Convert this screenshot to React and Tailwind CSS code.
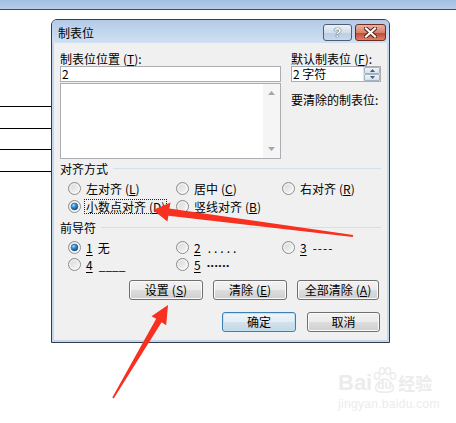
import React from 'react'

const Radio = ({ on }) => (
    <svg width="13" height="13" viewBox="0 0 13 13" className="shrink-0">
        <defs>
            <linearGradient id="rbg" x1="0" y1="0" x2="1" y2="1">
                <stop offset="0" stopColor="#d4d4d4" />
                <stop offset="1" stopColor="#fbfbfb" />
            </linearGradient>
            <radialGradient id="rdot" cx="0.35" cy="0.3" r="0.8">
                <stop offset="0" stopColor="#9fdcff" />
                <stop offset="0.45" stopColor="#2a8ad4" />
                <stop offset="1" stopColor="#0b3f72" />
            </radialGradient>
        </defs>
        <circle cx="6.5" cy="6.5" r="6" fill="url(#rbg)" stroke="#8c8c8c" />
        <circle cx="6.5" cy="6.5" r="4.6" fill="none" stroke="#ffffff" strokeOpacity="0.7" />
        {on && <circle cx="6.5" cy="6.5" r="3.4" fill="url(#rdot)" stroke="#1a4f80" strokeWidth="0.5" />}
    </svg>
)

const Key = ({ k }) => (
    <span className="ml-[3px]">(<span className="underline underline-offset-1">{k}</span>)</span>
)

const Option = ({ on, focus, children }) => (
    <div className="flex items-center h-[16px]">
        <Radio on={on} />
        <span className={focus
            ? 'ml-[3px] px-[1px] h-[15px] leading-[13px] border border-dotted border-[#222]'
            : 'ml-[3px] px-[1px] h-[15px] leading-[13px] border border-transparent'}>
            {children}
        </span>
    </div>
)

const Btn = ({ w, def, children }) => (
    <div className={def
        ? `${w} h-[20px] rounded-[3px] border border-[#3c7fb1] shadow-[inset_0_0_0_1px_#bfe3f8] bg-[linear-gradient(#eef5fa_0%,#e3edf4_50%,#d3e2ec_51%,#c5d7e4_100%)] flex items-center justify-center leading-[14px]`
        : `${w} h-[20px] rounded-[3px] border border-[#707070] shadow-[inset_0_0_0_1px_#fbfbfb] bg-[linear-gradient(#f2f2f2_0%,#ebebeb_50%,#dddddd_51%,#cfcfcf_100%)] flex items-center justify-center leading-[14px]`}>
        {children}
    </div>
)

const Tri = ({ up }) => (
    <svg width="7" height="4" viewBox="0 0 7 4">
        <path d={up ? 'M0 4L3.5 0L7 4Z' : 'M0 0L7 0L3.5 4Z'} fill="#a7a7a7" />
    </svg>
)

const GroupHead = ({ label }) => (
    <div className="h-[13px] flex items-center">
        <span className="leading-[13px]">{label}</span>
        <div className="ml-[5px] flex-1 h-px bg-[#d5dfe5]" />
    </div>
)

const Dialog = () => (
    <div className="w-[339px] rounded-t-[6px] border border-[#343d4a] bg-[#c4d7ee] flex flex-col">
        {/* title bar */}
        <div className="h-[23px] flex items-start rounded-t-[5px] bg-[linear-gradient(#b3cae7,#d1e0f2)]">
            <span className="pl-[6px] mt-[6px] leading-[13px]">制表位</span>
            <div className="ml-auto mt-[4px] mr-[3px] flex gap-[3px]">
                <div className="w-[29px] h-[17px] rounded-[3px] border border-[#4f5f73] bg-[linear-gradient(#eaf0f8_0%,#d2deec_50%,#bccde2_51%,#c9d8ea_100%)] flex items-center justify-center">
                    <span className="font-['Liberation_Sans',sans-serif] font-bold text-[13px] leading-[13px] text-white [text-shadow:0_0_1px_#2c3a4a,0_0_1px_#2c3a4a]">?</span>
                </div>
                <div className="w-[31px] h-[17px] rounded-[3px] border border-[#6e2b20] bg-[linear-gradient(#eab1a3_0%,#d8806b_50%,#c2462d_51%,#d9826b_100%)] flex items-center justify-center">
                    <svg width="13" height="11" viewBox="0 0 13 11">
                        <path d="M2 1.5L11 9.5M11 1.5L2 9.5" stroke="#4a1f18" strokeWidth="4" strokeLinecap="square" />
                        <path d="M2 1.5L11 9.5M11 1.5L2 9.5" stroke="#ffffff" strokeWidth="2.2" strokeLinecap="square" />
                    </svg>
                </div>
            </div>
        </div>

        {/* body */}
        <div className="mx-[2px] mb-[2px] bg-[#f0f0f0] px-[6px] pt-[9px] pb-[8px] flex flex-col">
            <div className="flex gap-[10px]">
                <div className="w-[221px] flex flex-col">
                    <div className="h-[14px] leading-[13px]">制表位位置<Key k="T" />:</div>
                    <div className="h-[16px] border border-[#abadb3] bg-white pl-[1px] text-[12px] leading-[13px]">2</div>
                    <div className="mt-[1px] h-[76px] border border-[#abadb3] bg-white flex justify-end">
                        <div className="w-[17px] bg-[#f5f5f5] flex flex-col justify-between items-center py-[7px]">
                            <Tri up />
                            <Tri />
                        </div>
                    </div>
                </div>
                <div className="w-[90px] flex flex-col">
                    <div className="h-[14px] leading-[13px] whitespace-nowrap">默认制表位<Key k="F" />:</div>
                    <div className="h-[16px] border border-[#abadb3] bg-white flex">
                        <span className="pl-[1px] leading-[13px] flex-1">2 字符</span>
                        <div className="w-[17px] flex flex-col border-l border-[#e3e3e3]">
                            <div className="h-[7px] border border-[#a3b3c6] rounded-[1px] bg-[linear-gradient(#f0f4f8,#d6e0ea)] flex items-center justify-center">
                                <svg width="5" height="3" viewBox="0 0 5 3"><path d="M0 3L2.5 0L5 3Z" fill="#4a5c72" /></svg>
                            </div>
                            <div className="h-[7px] border border-[#a3b3c6] rounded-[1px] bg-[linear-gradient(#f0f4f8,#d6e0ea)] flex items-center justify-center">
                                <svg width="5" height="3" viewBox="0 0 5 3"><path d="M0 0L5 0L2.5 3Z" fill="#4a5c72" /></svg>
                            </div>
                        </div>
                    </div>
                    <div className="mt-[11px] h-[13px] leading-[13px] whitespace-nowrap">要清除的制表位:</div>
                </div>
            </div>

            <div className="mt-[3px]">
                <GroupHead label="对齐方式" />
            </div>
            <div className="mt-[5px] pl-[8px] grid grid-cols-[108px_106px_1fr] gap-y-[2px]">
                <Option>左对齐<Key k="L" /></Option>
                <Option>居中<Key k="C" /></Option>
                <Option>右对齐<Key k="R" /></Option>
                <Option on focus>小数点对齐<Key k="D" /></Option>
                <Option>竖线对齐<Key k="B" /></Option>
            </div>

            <div className="mt-[7px]">
                <GroupHead label="前导符" />
            </div>
            <div className="mt-[5px] pl-[8px] grid grid-cols-[108px_106px_1fr] gap-y-[1px]">
                <Option on><span className="underline underline-offset-2">1</span><span className="ml-[5px]">无</span></Option>
                <Option><span className="underline underline-offset-2">2</span><span className="ml-[7px] tracking-[3px]">.....</span></Option>
                <Option><span className="underline underline-offset-2">3</span><span className="ml-[6px] tracking-[1px]">----</span></Option>
                <Option><span className="underline underline-offset-2">4</span><span className="ml-[6px]">____</span></Option>
                <Option><span className="underline underline-offset-2">5</span><span className="ml-[6px] font-['Noto_Sans',sans-serif] font-bold tracking-[0.5px]">······</span></Option>
            </div>

            <div className="mt-[8px] pr-[2px] flex justify-end gap-[10px]">
                <Btn w="w-[74px]">设置<Key k="S" /></Btn>
                <Btn w="w-[74px]">清除<Key k="E" /></Btn>
                <Btn w="w-[82px]">全部清除<Key k="A" /></Btn>
            </div>
            <div className="mt-[12px] pr-[1px] flex justify-end gap-[11px]">
                <Btn w="w-[74px]" def>确定</Btn>
                <Btn w="w-[73px]">取消</Btn>
            </div>
        </div>
    </div>
)

const Arrows = () => (
    <svg className="absolute inset-0 pointer-events-none" width="456" height="423" viewBox="0 0 456 423">
        <polygon fill="#f7301f" points="153,210 170.5,202.5 169.4,208.4 353.2,235.1 352.8,236.9 168.4,215.8 167.4,221.5" />
        <polygon fill="#f7301f" points="168,305 166.2,325.2 161.6,322.3 113.7,398.4 112.3,397.6 156.2,318.8 151.5,316.2" />
    </svg>
)

const Watermark = () => (
    <div className="absolute left-[338px] top-[367px] flex flex-col text-[#ececec] select-none">
        <div className="flex items-end h-[26px]">
            <span className="font-['Liberation_Sans',sans-serif] font-bold text-[22px] leading-[20px]">Bai</span>
            <div className="relative w-[25px] h-[26px]">
                <svg className="absolute inset-0" width="25" height="26" viewBox="0 0 25 26">
                    <ellipse cx="5" cy="9" rx="2.6" ry="3.2" fill="none" stroke="#ececec" strokeWidth="1.5" />
                    <ellipse cx="10" cy="4" rx="2.6" ry="3.2" fill="none" stroke="#ececec" strokeWidth="1.5" />
                    <ellipse cx="16" cy="4" rx="2.6" ry="3.2" fill="none" stroke="#ececec" strokeWidth="1.5" />
                    <ellipse cx="21" cy="9" rx="2.6" ry="3.2" fill="none" stroke="#ececec" strokeWidth="1.5" />
                    <path d="M4 23C2 19 8 12 12.5 12C17 12 23 19 21 23C19 26 6 26 4 23Z" fill="none" stroke="#ececec" strokeWidth="1.5" />
                </svg>
                <span className="absolute left-[5px] bottom-[2px] font-['Liberation_Sans',sans-serif] font-bold text-[12px] leading-[12px]">du</span>
            </div>
            <span className="ml-[1px] font-bold text-[17px] leading-[20px]">经验</span>
        </div>
        <span className="mt-[5px] font-['Liberation_Sans',sans-serif] text-[12px] leading-[12px] tracking-[0.3px]">jingyan.baidu.com</span>
    </div>
)

export default function App() {
    return (
        <div className="relative w-[456px] h-[423px] overflow-hidden bg-white font-['Noto_Sans_CJK_SC','Noto_Sans',sans-serif] text-[12px] text-black">
            <div className="h-[10px] border-b border-[#4a4a4a] bg-[linear-gradient(#a2bee2,#b6cdeb)]" />
            <div className="flex">
                <div className="w-[51px] flex flex-col">
                    <div className="mt-[96px] h-px bg-black" />
                    <div className="mt-[21px] h-px bg-black" />
                    <div className="mt-[20px] h-px bg-black" />
                    <div className="mt-[21px] h-px bg-black" />
                </div>
                <div className="pt-[9px]">
                    <Dialog />
                </div>
            </div>
            <Arrows />
            <Watermark />
        </div>
    )
}
